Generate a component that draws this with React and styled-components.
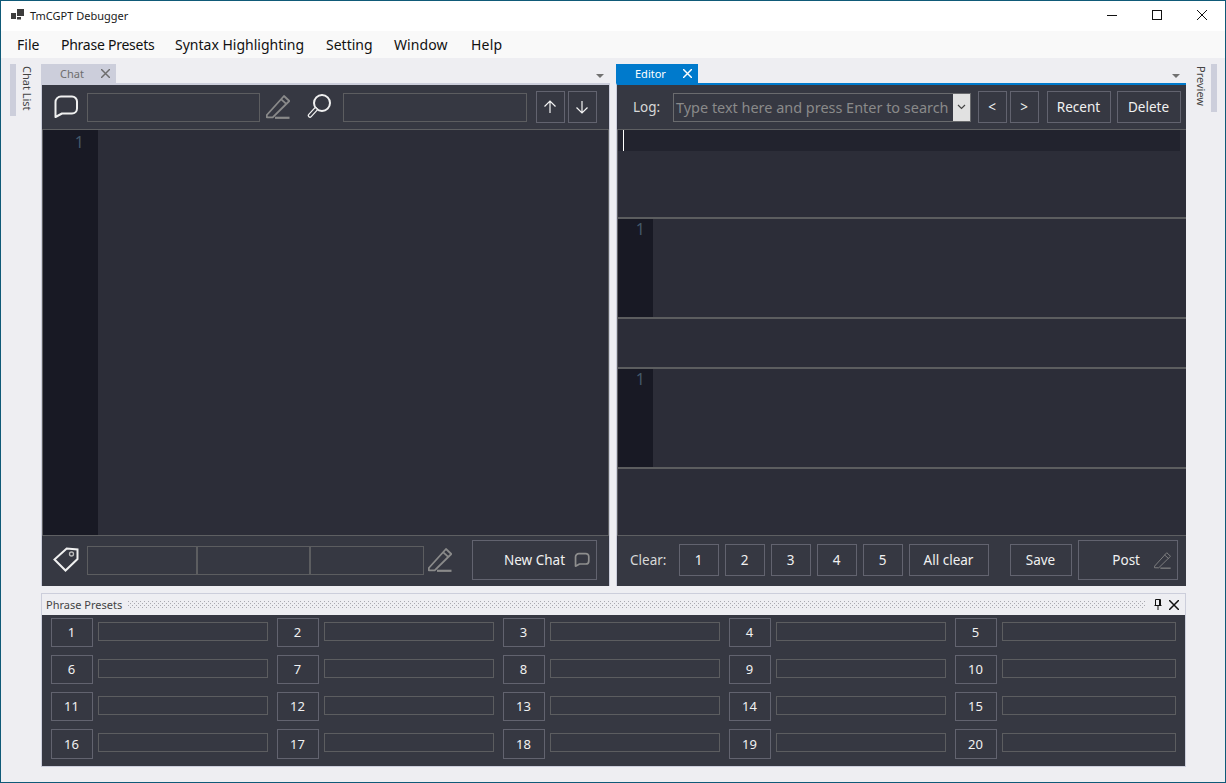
import React from 'react';
import styled, { createGlobalStyle } from 'styled-components';

const GlobalStyle = createGlobalStyle`
  html, body { margin: 0; padding: 0; background: #eeeef2; }
  * { box-sizing: border-box; }
`;

const font = '"Noto Sans", "Open Sans", "Liberation Sans", sans-serif';

const Window = styled.div`
  width: 1226px;
  height: 783px;
  display: flex;
  flex-direction: column;
  border: 1px solid #0f5a78;
  background: #eeeef2;
  font-family: ${font};
  overflow: hidden;
`;
const TitleBar = styled.div`
  height: 30px;
  flex: none;
  display: flex;
  align-items: center;
  background: #fff;
  padding: 0 0 2px 10px;
  color: #1a1a1a;
  font-size: 11px;
`;
const TitleText = styled.span`
  margin-left: 6px;
  flex: 1;
`;
const WinControls = styled.div`
  display: flex;
  align-items: center;
  gap: 35px;
  padding-right: 18px;
  svg { display: block; }
`;
const MenuBar = styled.div`
  height: 27px;
  flex: none;
  display: flex;
  align-items: center;
  padding-left: 16px;
  background: #f9f9f9;
  color: #111;
  font-size: 14px;
`;
const MenuItem = styled.span`
  width: ${(p) => p.$w}px;
  flex: none;
  white-space: nowrap;
  letter-spacing: ${(p) => p.$ls || 0}px;
`;
const Dock = styled.div`
  flex: 1;
  display: flex;
  min-height: 0;
`;
const Rail = styled.div`
  width: ${(p) => p.$w}px;
  flex: none;
  padding-top: 6px;
  display: flex;
  gap: ${(p) => p.$gap}px;
  padding-left: ${(p) => p.$pad}px;
`;
const RailMark = styled.div`
  width: 6px;
  height: ${(p) => p.$h}px;
  background: #cccedb;
  flex: none;
`;
const RailLabel = styled.div`
  writing-mode: vertical-rl;
  font-size: 11px;
  line-height: 14px;
  color: #444;
  height: 50px;
  padding-top: 2px;
`;
const Center = styled.div`
  width: 1145px;
  flex: none;
  padding-top: 6px;
  display: flex;
  flex-direction: column;
`;
const Panes = styled.div`
  height: 522px;
  flex: none;
  display: flex;
  gap: 6px;
`;
const Pane = styled.div`
  width: ${(p) => p.$w}px;
  flex: none;
  display: flex;
  flex-direction: column;
`;
const TabStrip = styled.div`
  height: 19px;
  flex: none;
  display: flex;
  align-items: stretch;
  position: relative;
`;
const Tab = styled.div`
  width: ${(p) => p.$w}px;
  display: flex;
  align-items: center;
  justify-content: space-between;
  padding: 0 6px 0 ${(p) => p.$pl}px;
  background: ${(p) => (p.$active ? '#007acc' : '#cccedb')};
  color: ${(p) => (p.$active ? '#fff' : '#6d6d6d')};
  font-size: 11px;
`;
const StripCaret = styled.div`
  position: absolute;
  right: ${(p) => p.$r}px;
  top: 10px;
  width: 0;
  height: 0;
  border-left: 4px solid transparent;
  border-right: 4px solid transparent;
  border-top: 4px solid #717171;
`;
const PaneBody = styled.div`
  flex: 1;
  display: flex;
  flex-direction: column;
  min-height: 0;
  border-top: 2px solid ${(p) => (p.$active ? '#007acc' : '#cccedb')};
  border-left: 1px solid #cccedb;
  border-right: ${(p) => (p.$noRight ? '0' : '1px solid #cccedb')};
  background: #363842;
`;
const Toolbar = styled.div`
  height: 45px;
  flex: none;
  display: flex;
  align-items: center;
  padding-left: ${(p) => p.$pl || 0}px;
  border-bottom: 1px solid #5e5f62;
`;
const BottomBar = styled.div`
  height: 51px;
  flex: none;
  display: flex;
  align-items: center;
  padding: 0 0 2px ${(p) => p.$pl || 0}px;
  border-top: 1px solid #5e5f62;
`;
const IconSlot = styled.div`
  width: ${(p) => p.$w}px;
  margin-left: ${(p) => p.$ml || 0}px;
  flex: none;
  display: flex;
  justify-content: center;
  align-items: center;
  svg { display: block; }
`;
const Field = styled.div`
  width: ${(p) => p.$w}px;
  height: 29px;
  flex: none;
  margin-left: ${(p) => p.$ml || 0}px;
  border: 1px solid #5c5d60;
  background: #363842;
`;
const Button = styled.div`
  width: ${(p) => p.$w}px;
  height: ${(p) => p.$h || 32}px;
  flex: none;
  margin-left: ${(p) => p.$ml || 0}px;
  display: flex;
  align-items: center;
  justify-content: ${(p) => (p.$end ? 'flex-end' : 'center')};
  padding-right: ${(p) => (p.$end ? 6 : 1)}px;
  gap: ${(p) => p.$gap || 0}px;
  border: 1px solid #62636f;
  color: #f1f1f1;
  font-size: 13.5px;
  background: #363842;
  svg { display: block; }
`;
const ToolLabel = styled.span`
  color: #d8d8d8;
  font-size: 13.5px;
  width: ${(p) => p.$w}px;
  flex: none;
`;
const Combo = styled.div`
  width: 298px;
  height: 29px;
  flex: none;
  display: flex;
  align-items: stretch;
  border: 1px solid #6a6b6e;
`;
const ComboText = styled.div`
  flex: 1;
  color: #8a8a8a;
  font-size: 14.45px;
  line-height: 27px;
  padding-left: 2px;
  white-space: nowrap;
  overflow: hidden;
`;
const ComboDrop = styled.div`
  width: 17px;
  flex: none;
  background: #e1e1e1;
  display: flex;
  align-items: center;
  justify-content: center;
`;
const CodeArea = styled.div`
  flex: 1;
  display: flex;
  min-height: 0;
  background: #2c2d38;
  border-left: 1px solid #5e5f62;
  border-right: 1px solid #5e5f62;
`;
const Gutter = styled.div`
  width: ${(p) => p.$w}px;
  flex: none;
  background: #181924;
  color: #43586a;
  font-size: 16px;
  line-height: ${(p) => p.$lh}px;
  text-align: right;
  padding-right: ${(p) => p.$pr}px;
`;
const EditorStack = styled.div`
  flex: 1;
  display: flex;
  flex-direction: column;
  min-height: 0;
  background: #2c2d38;
  border-left: 1px solid #5e5f62;
`;
const Section = styled.div`
  height: ${(p) => (p.$h ? `${p.$h}px` : 'auto')};
  flex: ${(p) => (p.$h ? 'none' : '1')};
  display: flex;
  border-bottom: ${(p) => (p.$line ? '2px solid #5c5d5f' : '0')};
`;
const LogPane = styled.div`
  flex: 1;
  position: relative;
`;
const CurrentLine = styled.div`
  height: 21px;
  margin-right: 6px;
  background: #22232e;
`;
const Caret = styled.div`
  position: absolute;
  left: 5px;
  top: 0;
  width: 1px;
  height: 21px;
  background: #fff;
`;
const Presets = styled.div`
  margin-top: 7px;
  height: 174px;
  flex: none;
  display: flex;
  flex-direction: column;
  border: 1px solid #cccedb;
  background: #363842;
`;
const PresetHead = styled.div`
  height: 21px;
  flex: none;
  background: #eeeef2;
  display: flex;
  align-items: center;
  padding: 0 4px;
  color: #444;
  font-size: 11px;
`;
const Grip = styled.div`
  flex: 1;
  height: 7px;
  margin: 0 4px 0 6px;
  background:
    conic-gradient(at 1px 1px, transparent 75%, #a9a9b0 0) 0 0 / 4px 4px,
    conic-gradient(at 1px 1px, transparent 75%, #a9a9b0 0) 2px 2px / 4px 4px;
`;
const HeadIcons = styled.div`
  display: flex;
  align-items: center;
  gap: 7px;
  padding-right: 2px;
  margin-left: 4px;
  svg { display: block; }
`;
const PresetGrid = styled.div`
  flex: 1;
  display: grid;
  grid-template-columns: repeat(4, 226px) 221px;
  grid-template-rows: repeat(3, 37px) 30px;
  padding: 3px 0 0 9px;
`;
const PresetCell = styled.div`
  display: flex;
  align-items: flex-start;
  gap: 5px;
`;
const PresetNum = styled.div`
  width: 42px;
  height: ${(p) => (p.$tall ? 30 : 29)}px;
  flex: none;
  display: flex;
  align-items: center;
  justify-content: center;
  padding: 0 1px 1px 0;
  border: 1px solid #62636f;
  color: #f1f1f1;
  font-size: 13px;
`;
const PresetInput = styled.div`
  width: ${(p) => p.$w}px;
  height: 19px;
  margin-top: 4px;
  flex: none;
  border: 1px solid #5c5d60;
`;

const AppIcon = () => (
  <svg width="13" height="12" viewBox="0 0 13 12" fill="#3c3c3c">
    <rect x="0" y="4" width="5" height="6" />
    <rect x="6" y="0" width="7" height="7" />
    <rect x="6" y="8" width="4" height="2.5" />
  </svg>
);
const Cross = ({ size = 10, color = '#111', width = 1 }) => (
  <svg width={size} height={size} viewBox="0 0 10 10" stroke={color} strokeWidth={width} fill="none">
    <path d="M0 0L10 10M10 0L0 10" />
  </svg>
);
const Bubble = ({ size = 26, color = '#f0f0f0', width = 2 }) => (
  <svg width={size} height={size} viewBox="0 0 26 26" fill="none" stroke={color} strokeWidth={width}>
    <path d="M8 2.500h11a5 5 0 0 1 5 5v7a5 5 0 0 1-5 5H9l-6.500 3.500V8a5.500 5.500 0 0 1 5.500-5.500z" strokeLinejoin="round" />
  </svg>
);
const Pencil = ({ size = 24, color = '#8a8a8a', width = 1.8 }) => (
  <svg width={size} height={size} viewBox="0 0 24 24" fill="none" stroke={color} strokeWidth={width}>
    <path d="M.8 20L18 1l5.300 5L6.700 22.300H.8z" strokeLinejoin="round" />
    <path d="M15 4.200l5.500 5" />
    <path d="M9 22.800h14.500" strokeWidth={width + 0.4} />
  </svg>
);
const Magnifier = () => (
  <svg width="26" height="26" viewBox="0 0 26 26" fill="none" stroke="#f0f0f0">
    <circle cx="15" cy="9" r="8" strokeWidth="2" />
    <path d="M8.500 15.500L3 21.500" strokeWidth="4.500" strokeLinecap="round" />
    <path d="M8.500 15.500L3 21.500" strokeWidth="2" stroke="#363842" strokeLinecap="round" />
  </svg>
);
const Tag = () => (
  <svg width="26" height="26" viewBox="0 0 26 26" fill="none" stroke="#f0f0f0" strokeWidth="2">
    <path d="M1.500 12.500L13.700 1.500l10.800 1v9.500L12.500 23.500z" strokeLinejoin="miter" />
    <circle cx="18.500" cy="7" r="2" strokeWidth="1.300" stroke="#bbb" />
  </svg>
);
const Arrow = ({ down }) => (
  <svg width="14" height="14" viewBox="0 0 14 14" fill="none" stroke="#f4f4f4" strokeWidth="1.200" style={{ transform: down ? 'rotate(180deg)' : 'none' }}>
    <path d="M7 13V1M1.500 6.500L7 1l5.500 5.500" />
  </svg>
);
const Chevron = () => (
  <svg width="9" height="6" viewBox="0 0 9 6" fill="none" stroke="#444" strokeWidth="1.200">
    <path d="M1 1l3.500 3.500L8 1" />
  </svg>
);
const Pin = () => (
  <svg width="8" height="11" viewBox="0 0 8 11" fill="none" stroke="#111" strokeWidth="1">
    <path d="M1.500 .5h5v6h-5zM.5 6.500h7M4 6.500V11M5.500 1v5.500" />
  </svg>
);

const MENU_ITEMS = [
  { label: 'File', w: 44 },
  { label: 'Phrase Presets', w: 114, ls: -0.25 },
  { label: 'Syntax Highlighting', w: 151 },
  { label: 'Setting', w: 68 },
  { label: 'Window', w: 77, ls: 0.1 },
  { label: 'Help', w: 40, ls: 0.2 },
];
const FIELD_NUMBERS = Array.from({ length: 20 }, (_, i) => i + 1);

const App = () => (
  <Window>
    <GlobalStyle />
    <TitleBar>
      <AppIcon />
      <TitleText>TmCGPT Debugger</TitleText>
      <WinControls>
        <svg width="10" height="10" viewBox="0 0 10 10" stroke="#111" fill="none"><path d="M0 5.500h10" /></svg>
        <svg width="10" height="10" viewBox="0 0 10 10" stroke="#111" fill="none"><rect x=".5" y=".5" width="9" height="9" /></svg>
        <Cross />
      </WinControls>
    </TitleBar>
    <MenuBar>
      {MENU_ITEMS.map(({ label, w, ls }) => (
        <MenuItem key={label} $w={w} $ls={ls}>{label}</MenuItem>
      ))}
    </MenuBar>
    <Dock>
      <Rail $w={40} $gap={4} $pad={9}>
        <RailMark $h={52} />
        <RailLabel>Chat List</RailLabel>
      </Rail>
      <Center>
        <Panes>
          <Pane $w={569}>
            <TabStrip>
              <Tab $w={75} $pl={19}>
                Chat <Cross size={9} color="#6d6d6d" width={1.600} />
              </Tab>
              <StripCaret $r={6} />
            </TabStrip>
            <PaneBody>
              <Toolbar $pl={11}>
                <IconSlot $w={26}><Bubble /></IconSlot>
                <Field $w={173} $ml={8} />
                <IconSlot $w={24} $ml={6}><Pencil /></IconSlot>
                <IconSlot $w={26} $ml={17}><Magnifier /></IconSlot>
                <Field $w={184} $ml={10} />
                <Button $w={29} $ml={9}><Arrow /></Button>
                <Button $w={29} $ml={3}><Arrow down /></Button>
              </Toolbar>
              <CodeArea>
                <Gutter $w={55} $pr={14} $lh={24}>1</Gutter>
              </CodeArea>
              <BottomBar $pl={11}>
                <IconSlot $w={26}><Tag /></IconSlot>
                <Field $w={110} $ml={8} />
                <Field $w={113} />
                <Field $w={114} />
                <IconSlot $w={26} $ml={3}><Pencil /></IconSlot>
                <Button $w={125} $h={40} $ml={19} $gap={9} $end>
                  New Chat <Bubble size={16} color="#8e8e8e" width={2.800} />
                </Button>
              </BottomBar>
            </PaneBody>
          </Pane>
          <Pane $w={570}>
            <TabStrip>
              <Tab $w={82} $pl={19} $active>
                Editor <Cross size={9} color="#fff" width={1.600} />
              </Tab>
              <StripCaret $r={6} />
            </TabStrip>
            <PaneBody $active $noRight>
              <Toolbar $pl={16}>
                <ToolLabel $w={40}>Log:</ToolLabel>
                <Combo>
                  <ComboText>Type text here and press Enter to search</ComboText>
                  <ComboDrop><Chevron /></ComboDrop>
                </Combo>
                <Button $w={29} $ml={7}>&lt;</Button>
                <Button $w={29} $ml={3}>&gt;</Button>
                <Button $w={64} $ml={8}>Recent</Button>
                <Button $w={64} $ml={6}>Delete</Button>
              </Toolbar>
              <EditorStack>
                <Section $h={89} $line>
                  <LogPane>
                    <CurrentLine />
                    <Caret />
                  </LogPane>
                </Section>
                <Section $h={100} $line>
                  <Gutter $w={35} $pr={8} $lh={21}>1</Gutter>
                </Section>
                <Section $h={50} $line />
                <Section $h={100} $line>
                  <Gutter $w={35} $pr={8} $lh={21}>1</Gutter>
                </Section>
                <Section />
              </EditorStack>
              <BottomBar $pl={13}>
                <ToolLabel $w={49}>Clear:</ToolLabel>
                <Button $w={40}>1</Button>
                <Button $w={40} $ml={6}>2</Button>
                <Button $w={40} $ml={6}>3</Button>
                <Button $w={40} $ml={6}>4</Button>
                <Button $w={40} $ml={6}>5</Button>
                <Button $w={80} $ml={6}>All clear</Button>
                <Button $w={62} $ml={21}>Save</Button>
                <Button $w={100} $h={40} $ml={6} $gap={14} $end>
                  Post <Pencil size={17} width={1.200} />
                </Button>
              </BottomBar>
            </PaneBody>
          </Pane>
        </Panes>
        <Presets>
          <PresetHead>
            Phrase Presets
            <Grip />
            <HeadIcons>
              <Pin />
              <Cross size={10} width={1.500} />
            </HeadIcons>
          </PresetHead>
          <PresetGrid>
            {FIELD_NUMBERS.map((n) => (
              <PresetCell key={n}>
                <PresetNum $tall={n > 15}>{n}</PresetNum>
                <PresetInput $w={n % 5 === 0 ? 174 : 170} />
              </PresetCell>
            ))}
          </PresetGrid>
        </Presets>
      </Center>
      <Rail $w={39} $gap={3} $pad={8}>
        <RailLabel>Preview</RailLabel>
        <RailMark $h={48} />
      </Rail>
    </Dock>
  </Window>
);

export default App;
